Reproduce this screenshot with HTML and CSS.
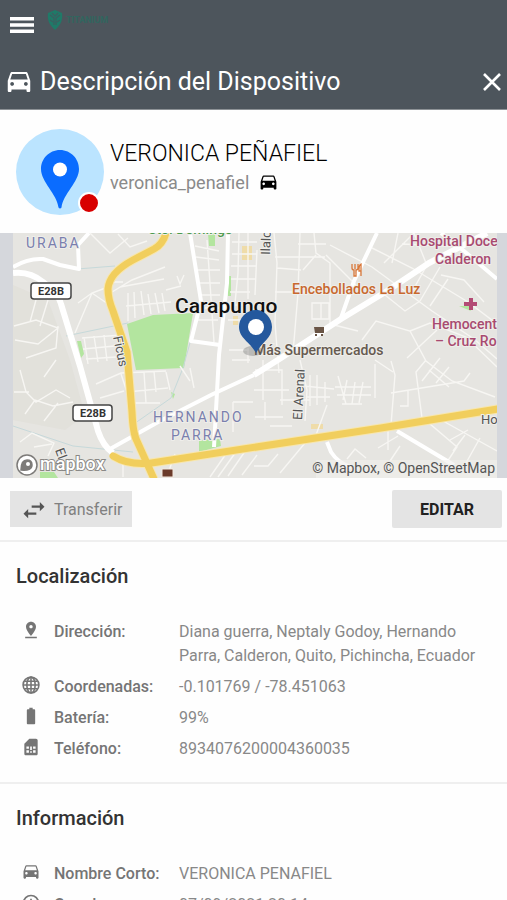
FILE: index.html
```html
<!DOCTYPE html>
<html lang="es">
<head>
<meta charset="utf-8">
<meta name="viewport" content="width=device-width, initial-scale=1">
<title>Descripción del Dispositivo</title>
<link rel="stylesheet" href="styles.css">
</head>
<body>
<svg class="sprite" aria-hidden="true">
  <symbol id="car" viewBox="0 0 24 24"><path d="M18.92 5.01C18.72 4.42 18.16 4 17.5 4h-11c-.66 0-1.21.42-1.42 1.01L3 11v8c0 .55.45 1 1 1h1c.55 0 1-.45 1-1v-1h12v1c0 .55.45 1 1 1h1c.55 0 1-.45 1-1v-8l-2.08-5.99zM6.5 15c-.83 0-1.5-.67-1.5-1.5S5.67 12 6.5 12s1.5.67 1.5 1.5S7.33 15 6.5 15zm11 0c-.83 0-1.5-.67-1.5-1.5s.67-1.5 1.5-1.5 1.5.67 1.5 1.5-.67 1.5-1.5 1.5zM5 10l1.5-4.5h11L19 10H5z"/></symbol>
</svg>

<header class="top">
  <div class="brandbar">
    <button class="icon-btn" aria-label="Menú"><svg width="24" height="16" viewBox="0 0 24 16"><path d="M0 0h24v3.500H0zM0 6.200h24v3.500H0zM0 12.400h24v3.500H0z"/></svg></button>
    <div class="brand">
      <svg width="16" height="20" viewBox="0 0 16 20"><path fill="#1f7a68" d="M8 0l7 3c1 6-1 12-7 17C2 15 0 9 1 3z"/><path fill="none" stroke="#3b5f60" stroke-width="1.300" d="M3 5l4 3v7M13 5l-4 3v7M5 3l3 3 3-3M3 10l3 2m7-2l-3 2"/></svg>
      <span>TITANIUM</span>
    </div>
  </div>
  <div class="titlebar">
    <svg class="title-car" viewBox="0 0 24 24"><use href="#car"/></svg>
    <h1>Descripción del Dispositivo</h1>
    <button class="icon-btn" aria-label="Cerrar"><svg width="18" height="18" viewBox="0 0 18 18"><path fill="none" stroke="currentColor" stroke-width="2.600" d="M1 1l16 16M17 1L1 17"/></svg></button>
  </div>
</header>

<main>
  <section class="profile">
    <div class="avatar">
      <svg width="88" height="86" viewBox="0 0 88 86"><ellipse cx="44" cy="43" rx="44" ry="43" fill="#bbe4ff"/><path fill="#0a6cff" d="M44 21c-11 0-19 9-19 19 0 13 16 25 17.500 38.500q1.500 2 3 0C47 65 63 53 63 40c0-10-8-19-19-19z"/><circle cx="44" cy="40.500" r="7" fill="#fff"/></svg>
      <span class="status"></span>
    </div>
    <div class="who">
      <h2>VERONICA PEÑAFIEL</h2>
      <p>veronica_penafiel <svg class="user-car" viewBox="0 0 24 24"><use href="#car"/></svg></p>
    </div>
  </section>

  <div class="map">
    <svg viewBox="13 233 484 245" preserveAspectRatio="xMidYMid slice" role="img" aria-label="Mapa de Carapungo">
      <rect x="13" y="233" width="484" height="245" fill="#e6e5e1"/>
      <path fill="#dfddd7" d="M13 285l35 15 22 60 15 55-20 15-52-10z" opacity=".6"/>
      <g fill="#b3e59f">
        <path d="M127 324l26-9 40-2-9 55-48 2z"/>
        <path d="M208 233h7v13h-6zM77 341l4 0 3 13-3 4zM228 276h3v20h-3zM199 440l21-1 1 7-22 6zM40 472l14 0 4 6H40zM171 392l4 2-2 5zM459 306h10l2 5z"/>
      </g>
      <path fill="#efdca9" d="M242 246h10v14h-10zM233 316h5v9h-5zM311 424h12v5h-12z"/>
      <g class="water"><path d="M77 269l38-3M190 233l11 70-18 65-12 30-40 28M13 426l60 20 60 6M66 336l62-13"/></g>
      <g class="lanes">
        <path d="M90 233l20 20 18-15M118 234l12 13 17-6M105 282h18M112 292l20-12 33-13M120 287l44-8M75 333l17-40 16-6M78 303l14-10 16 11M128 293l0 28M134 292l1 26M141 291l3 24M148 294l3 20M155 293l4 20M162 293l3 18M126 306l45-4M166 290l15-4M177 276l3 8 4-9"/>
        <path d="M82 338l40-3M83 349l32-3M86 359l30-2M84 337l4 27M94 336l4 26M104 335l3 26M14 326l22-6 22 8-20 16-23-4M36 300l-6 22M48 300l-8 26M58 326l-2 22-30 10M20 370l6 22 10 10 20-12 14 8M14 392h15M25 414l10-14 18 6 20-4M44 421l14-18M56 360l-12 17M20 442l12-9 22 10-6 13M34 447l18-3"/>
        <path d="M96 384l25-11 45-2M121 374l6 18 41-4M100 398l24-7M144 372l2 31M154 371l2 21M166 372l4 18M130 403h30M190 368l4 20"/>
        <path d="M195 246l24 5M196 257l23 3M198 270h22M199 283h21M200 295h20M197 308h22M195 320h23M207 240l7 102M232 242h25M232 254h25M231 266h25M231 279h25M230 292h20M230 305h16M228 320h17M239 233l-1 40-4 40M248 233v66M257 250l-2 45"/>
        <path d="M274 233l3 30-2 60 4 50M300 233l-2 60-5 60M314 233l2 20 14 10v62M275 257h50M298 244h28M277 268l24 2M275 292h50M312 303h17v16h-17zM321 303v16M303 270l13-15M326 255l30 30M330 245l42 22 60 44 42 28 23 20M372 248l40 20 56 34 29 22M384 263l30-30 12 30M398 233l-6 30M402 244l46 2M427 265l-14 25M448 279l-18 27M440 267l-20 34M484 302l-20-22-23-5"/>
        <path d="M362 340l14-19 34 10 16 30 26 20 43 16M410 331l20-8 36 14 31 30M391 361l4 14-4 50M375 360l18 12M375 364v34M391 393l73-12 6-8M426 360l-10 12 6 46M429 370l20 17M440 358l-18 23M449 367l-13 16M400 406h8v-15M437 330l-30 28"/>
        <path d="M255 370h27v35M263 360v40M254 390h35M265 402v18M255 417h28M300 360l7 30-2 31M280 400h30M310 375v31M317 375v30M325 382v20M304 386l30 3M306 397h24M338 376l8 28M347 380l-4 20M355 382l-3 22M363 382l-4 21M335 387h36M337 395h34M342 404h20M327 405l-11 30-14 4M270 426h22M305 443l-25 30M254 466h14l10-12M347 459l8-10 11 9M388 430v20M378 448l20-12M400 446l-10 15M423 418l34 29-10 15M443 421l54 30M450 440l18-10M465 435l-12 16M480 438l-14 25M233 402h20M233 402v30M232 360h18M229 350h20M248 348v15M180 366l10 15"/>
        <path d="M175 454l-8 22M228 451l-18 26M238 449l-20 28M248 447l-20 29M123 460v17M257 455l-15 20M334 325l24 6M385 295l20 16 15-10"/>
      </g>
      <g class="roads">
        <path class="wide" d="M13 273q17-2 30 9 16 12 18 22l19 62 18 65q5 15 15 22"/>
        <path d="M228 233l-1 50-8 72-5 92M110 449l50-28 53-27 41-19"/>
        <path class="wide" d="M254 375l27-17 60-39 46-28 42-28 58-30"/>
        <path d="M13 267q15-9 30-8l17 6 19 4-1-24 11-12M190 233l11 68-10 40 29 4M341 318l13-37 23-48M441 233l23 18 33 28M327 442l4 10q7 11 20 15M397 431l57 34"/>
      </g>
      <g class="highway-edge"><path d="M166 233q-3 11-12 16l-21 11q-24 13-25 29 0 10 5 22l14 41 5 60q1 22 5 29l17 38M113 456q18 11 45 6l223-34 117-19"/></g>
      <g class="highway"><path d="M166 233q-3 11-12 16l-21 11q-24 13-25 29 0 10 5 22l14 41 5 60q1 22 5 29l17 38M113 456q18 11 45 6l223-34 117-19"/></g>

      <g class="shield">
        <rect x="31" y="283" width="40" height="16" rx="3"/><text x="51" y="295">E28B</text>
        <rect x="73" y="405" width="39" height="16" rx="3"/><text x="93" y="417">E28B</text>
      </g>
      <g class="halo area"><text x="26" y="248">URABA</text><text x="153" y="422">HERNANDO</text><text x="171" y="440">PARRA</text></g>
      <g class="halo street">
        <text transform="translate(113 337) rotate(78)">Ficus</text>
        <text transform="translate(302 420) rotate(-87)">El Arenal</text>
        <text transform="translate(270 255) rotate(-88)">Ilalc</text>
        <text transform="translate(55 450) rotate(70)">El</text>
        <text x="481" y="424">Ho</text>
      </g>
      <text class="halo park" x="148" y="234">Sto. Domingo</text>
      <g class="halo clinic"><text x="410" y="246">Hospital Doce</text><text x="435" y="264">Calderon</text><text x="432" y="329">Hemocent</text><text x="435" y="346">– Cruz Ro</text></g>
      <path d="M469 298h4v4h4v4h-4v4h-4v-4h-5v-4h5z" fill="#b34a74"/>
      <text class="halo food" x="292" y="294">Encebollados La Luz</text>
      <path d="M352 264v4q0 2 2 2v6h2v-6q2 0 2-2v-4M355 264v5M361 276v-12q-2 1-2 5v2h2" fill="none" stroke="#d9783a" stroke-width="1.300"/>
      <path d="M314 327h10v6h-9zM315 334h2v2h-2zM321 334h2v2h-2z" fill="#6a5546"/>
      <path d="M162 469h11v8h-11z" fill="#6b3b2a" stroke="#f3e9df"/>
      <text class="halo city" x="175" y="313">Carapungo</text>
      <text class="halo shop" x="254" y="355">Más Supermercados</text>
      <ellipse cx="253" cy="351" rx="10" ry="5" fill="#555" opacity=".3"/>
      <path fill="#24589d" d="M256 310c-10 0-17 8-17 17 0 11 11 15 17 26 6-11 16-15 16-26 0-9-7-17-16-17z"/>
      <circle cx="256" cy="327" r="8" fill="#fff"/>
      <g fill="#fff" stroke="#7d7b79" stroke-width="1.500"><circle cx="27" cy="465" r="10"/><path fill="#7d7b79" d="M21 470q0-10 6-10 5 0 5 5 0 6-11 5z"/></g>
      <circle cx="28" cy="464" r="2" fill="#fff"/>
      <text class="logo" x="40" y="470">mapbox</text>
      <rect x="316" y="460" width="181" height="18" fill="#f1f0ed" opacity=".6"/>
      <text class="credit" x="495" y="473">© Mapbox, © OpenStreetMap</text>
    </svg>
  </div>

  <div class="actions">
    <button class="transfer"><svg width="28" height="28" viewBox="0 0 24 24"><path d="M21 10l-4-4v3h-7v2h7v3zM7 12l-4 4 4 4v-3h7v-2H7z"/></svg>Transferir</button>
    <button class="edit">EDITAR</button>
  </div>

  <section class="details">
    <h3>Localización</h3>
    <dl>
      <div><dt><svg viewBox="0 0 24 24"><path d="M18 8c0-3.310-2.690-6-6-6S6 4.690 6 8c0 4.500 6 11 6 11s6-6.500 6-11zm-8 0c0-1.100.9-2 2-2s2 .9 2 2-.89 2-2 2c-1.100 0-2-.9-2-2zM5 20v2h14v-2H5z"/></svg>Dirección:</dt><dd>Diana guerra, Neptaly Godoy, Hernando Parra, Calderon, Quito, Pichincha, Ecuador</dd></div>
      <div><dt><svg viewBox="0 0 24 24"><g fill="none" stroke="currentColor" stroke-width="1.900"><circle cx="12" cy="12" r="9.500"/><ellipse cx="12" cy="12" rx="5" ry="9.500"/><path d="M12 2.500v19M2.500 12h19M4 7.500h16M4 16.500h16"/></g></svg>Coordenadas:</dt><dd>-0.101769 / -78.451063</dd></div>
      <div><dt><svg viewBox="0 0 24 24"><path d="M15.670 4H14V2h-4v2H8.330C7.600 4 7 4.600 7 5.330v15.330C7 21.400 7.600 22 8.330 22h7.330c.74 0 1.340-.6 1.340-1.330V5.330C17 4.600 16.400 4 15.670 4z"/></svg>Batería:</dt><dd>99%</dd></div>
      <div><dt><svg viewBox="0 0 24 24"><path fill-rule="evenodd" d="M20 4c0-1.100-.9-2-2-2h-8L4 8v12c0 1.100.9 2 2 2h12c1.100 0 2-.9 2-2zM6.500 11.500h3v2.500h-3zM11 11.500h2v4h-2zM14.500 11.500h3v2.500h-3zM6.500 16h3v3h-3zM11 17h2v2h-2zM14.500 16h3v3h-3z"/></svg>Teléfono:</dt><dd>8934076200004360035</dd></div>
    </dl>
  </section>

  <section class="details">
    <h3>Información</h3>
    <dl>
      <div><dt><svg viewBox="0 0 24 24"><use href="#car"/></svg>Nombre Corto:</dt><dd>VERONICA PENAFIEL</dd></div>
      <div><dt><svg viewBox="0 0 24 24"><g fill="none" stroke="currentColor" stroke-width="2"><circle cx="12" cy="12" r="9"/><path d="M12 7v6l4 2"/></g></svg>Creado:</dt><dd>07/09/2021 20:14</dd></div>
    </dl>
  </section>
</main>
</body>
</html>
```
FILE: styles.css
```css
* { box-sizing: border-box; }
body {
  margin: 0;
  background: #fefefe;
  color: #212121;
  font-family: Roboto, "Liberation Sans", sans-serif;
}
h1, h2, h3, p, dl, dd { margin: 0; }
button { border: 0; padding: 0; font: inherit; color: inherit; }
svg { fill: currentColor; flex: none; }
.sprite { position: absolute; width: 0; height: 0; }

.top { background: #4d555c; color: #fff; border-bottom: 1px solid #8d9296; }
.icon-btn { display: flex; background: none; }
.brandbar { display: flex; align-items: flex-start; gap: 13px; height: 54px; padding: 10px; }
.brandbar .icon-btn { padding-top: 7px; }
.brand { display: flex; align-items: center; gap: 3px; color: #31665f; font-size: 9px; font-weight: 700; }
.titlebar { display: flex; align-items: center; height: 55px; padding: 0 6px 0 4px; }
.title-car { width: 30px; height: 30px; margin-right: 6px; }
h1 { flex: 1; font-size: 25px; line-height: 30px; font-weight: 400; }

.profile { display: flex; align-items: center; gap: 6px; height: 123px; padding: 0 16px; }
.avatar { position: relative; display: flex; }
.status {
  position: absolute; right: 4px; bottom: 1px;
  width: 22px; height: 22px;
  border: 2px solid #fff; border-radius: 50%;
  background: #d80000;
}
h2 { font-size: 23px; line-height: 30px; font-weight: 300; color: #000; }
.who { padding-bottom: 8px; }
.who p { display: flex; align-items: center; gap: 9px; font-size: 18px; line-height: 28px; color: #8a8a8a; }
.user-car { width: 21px; height: 21px; color: #000; }

.map { display: flex; padding: 0 10px 0 13px; background: #d5d7dc; }
.map > svg { flex: 1; min-width: 0; height: 245px; font-size: 14px; }
.lanes, .roads, .water, .highway, .highway-edge { fill: none; stroke: #f7f6f3; }
.lanes { stroke-width: 1.4px; }
.water { stroke: #c6d9da; stroke-width: 1px; }
.roads { stroke: #fff; stroke-width: 4px; stroke-linejoin: round; }
.roads .wide { stroke-width: 6px; }
.highway-edge { stroke: #f7e6ae; stroke-width: 9px; }
.highway { stroke: #f1ce5d; stroke-width: 7px; stroke-linecap: round; }
.halo { paint-order: stroke; stroke: #efeeea; stroke-width: 2px; }
.shield { fill: #fff; stroke: #444; stroke-width: 1.5px; }
.shield text { fill: #333; stroke: none; font-size: 11px; font-weight: 700; text-anchor: middle; }
.area { fill: #7a7fae; letter-spacing: 2px; }
.street { fill: #555; font-size: 13px; }
.park { fill: #4d9a4d; font-weight: 500; }
.clinic { fill: #a84a70; font-weight: 500; }
.food { fill: #c8682f; font-weight: 500; }
.shop { fill: #665a50; font-weight: 500; }
.city { fill: #111; font-size: 21px; font-weight: 500; }
.logo { fill: #fff; stroke: #8a8885; stroke-width: 2px; paint-order: stroke; font-size: 18px; font-weight: 500; }
.credit { fill: #555; text-anchor: end; font-size: 14px; }

.actions {
  display: flex; justify-content: space-between; align-items: center;
  padding: 12px 5px 12px 10px;
}
.actions button { background: #e4e4e4; font-size: 16px; }
.transfer { display: flex; align-items: center; gap: 6px; height: 36px; padding: 0 10px; }
.actions .transfer { color: #808080; }
.transfer svg { color: #555; }
.actions .edit { height: 38px; min-width: 110px; font-weight: 700; border-radius: 2px; }

.details { border-top: 2px solid #efefef; padding: 20px 16px 21px; color: #757575; }
h3 { color: #333; font-size: 20px; line-height: 28px; font-weight: 500; }
dl { display: grid; gap: 7px; margin-top: 30px; font-size: 16px; line-height: 24px; }
dl div { display: grid; grid-template-columns: 163px 1fr; }
dt { display: flex; align-items: flex-start; font-weight: 500; }
dt svg { width: 20px; height: 20px; margin: 0 13px 0 5px; }
dd { color: #888; }
```
